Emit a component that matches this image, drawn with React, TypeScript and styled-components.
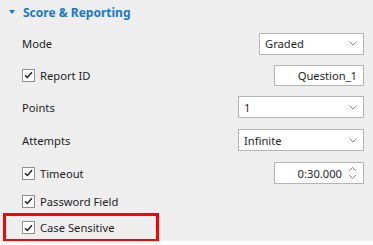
import { FC, ReactNode } from 'react';
import styled, { createGlobalStyle } from 'styled-components';

const GlobalStyle = createGlobalStyle`
  html, body {
    margin: 0;
    padding: 0;
    background: #ffffff;
  }
  body {
    font-family: 'Noto Sans', 'Open Sans', Arial, sans-serif;
    font-size: 11.2px;
    color: #1e1e1e;
  }
`;

const Panel = styled.div`
  width: 373px;
  height: 241px;
  background: #eeeeee;
  display: flex;
  flex-direction: column;
`;

const Header = styled.div`
  height: 24px;
  flex-shrink: 0;
  display: flex;
  align-items: center;
  padding-left: 9px;
  gap: 8px;
  color: #1b78c8;
  font-weight: 700;
  font-size: 12px;
  margin-bottom: 4px;
`;

const Triangle = styled.span`
  width: 0;
  height: 0;
  border-left: 3.5px solid transparent;
  border-right: 3.5px solid transparent;
  border-top: 4px solid #1b78c8;
`;

const Row = styled.div<{ $h: number; $flush?: boolean }>`
  height: ${(p) => p.$h}px;
  flex-shrink: 0;
  display: flex;
  align-items: center;
  justify-content: space-between;
  padding: 0 9px 0 ${(p) => (p.$flush ? 0 : 22)}px;
`;

const Label = styled.label`
  display: flex;
  align-items: center;
  gap: 5px;
  white-space: nowrap;
`;

const Box = styled.span`
  width: 11px;
  height: 11px;
  border: 1px solid #8f8f8f;
  background: #ffffff;
  display: flex;
  align-items: center;
  justify-content: center;
`;

const Field = styled.div<{ $w: number; $h?: number }>`
  width: ${(p) => p.$w}px;
  height: ${(p) => p.$h ?? 22}px;
  box-sizing: border-box;
  border: 1px solid #b4b4b4;
  background: #ffffff;
  display: flex;
  align-items: center;
  gap: 6px;
  padding: 0 6px 0 5px;
  color: #1e1e1e;
`;

const FieldText = styled.span<{ $right?: boolean }>`
  flex: 1;
  text-align: ${(p) => (p.$right ? 'right' : 'left')};
`;

const Highlight = styled.div`
  height: 29px;
  width: 156px;
  box-sizing: border-box;
  border: 3px solid #ff0000;
  display: flex;
  align-items: center;
  padding-left: 16px;
  margin-left: 3px;
`;

const Check: FC = () => (
  <Box>
    <svg width='9' height='8' viewBox='0 0 9 8'>
      <path d='M1 4.2 L3.3 6.5 L8 1.2' fill='none' stroke='#1e1e1e' strokeWidth='1.4' />
    </svg>
  </Box>
);

const Chevron: FC = () => (
  <svg width='8' height='5' viewBox='0 0 8 5'>
    <path d='M0.5 0.5 L4 4 L7.5 0.5' fill='none' stroke='#8a8a8a' strokeWidth='1' />
  </svg>
);

const Spinner: FC = () => (
  <svg width='9' height='14' viewBox='0 0 9 14'>
    <path d='M1 5 L4.5 1.5 L8 5' fill='none' stroke='#8a8a8a' strokeWidth='1' />
    <path d='M1 9 L4.5 12.5 L8 9' fill='none' stroke='#8a8a8a' strokeWidth='1' />
  </svg>
);

const Select: FC<{ w: number; children: ReactNode }> = ({ w, children }) => (
  <Field $w={w}>
    <FieldText>{children}</FieldText>
    <Chevron />
  </Field>
);

export default function App() {
  return (
    <>
      <GlobalStyle />
      <Panel>
        <Header>
          <Triangle />
          Score &amp; Reporting
        </Header>
        <Row $h={31}>
          <Label>Mode</Label>
          <Select w={105}>Graded</Select>
        </Row>
        <Row $h={32}>
          <Label>
            <Check />
            Report ID
          </Label>
          <Field $w={90} $h={21}>
            <FieldText $right>Question_1</FieldText>
          </Field>
        </Row>
        <Row $h={32}>
          <Label>Points</Label>
          <Select w={126}>1</Select>
        </Row>
        <Row $h={34}>
          <Label>Attempts</Label>
          <Select w={126}>Infinite</Select>
        </Row>
        <Row $h={32}>
          <Label>
            <Check />
            Timeout
          </Label>
          <Field $w={90}>
            <FieldText $right>0:30.000</FieldText>
            <Spinner />
          </Field>
        </Row>
        <Row $h={24}>
          <Label>
            <Check />
            Password Field
          </Label>
        </Row>
        <Row $h={29} $flush>
          <Highlight>
            <Label>
              <Check />
              Case Sensitive
            </Label>
          </Highlight>
        </Row>
      </Panel>
    </>
  );
}
